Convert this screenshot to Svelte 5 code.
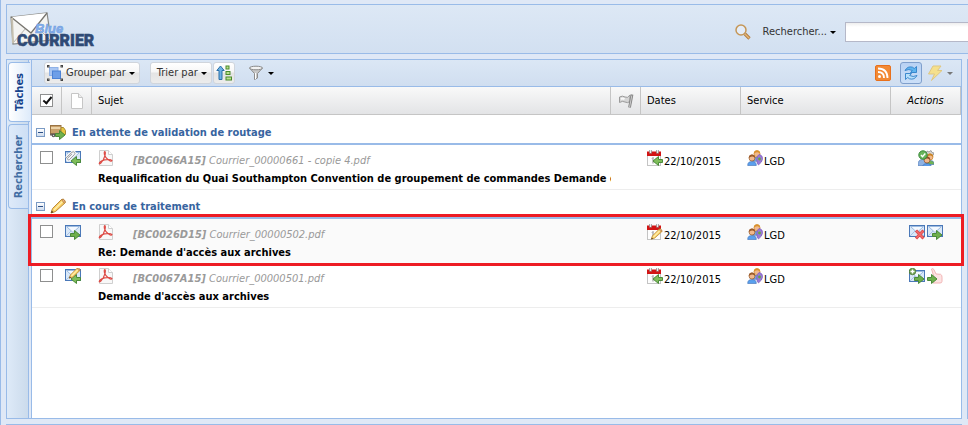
<script>
  const groups = [
    {
      title: 'En attente de validation de routage',
      icon: 'truck',
      rows: [
        {
          status: 'clipIn', ref: '[BC0066A15]', file: 'Courrier_00000661 - copie 4.pdf',
          subject: 'Requalification du Quai Southampton Convention de groupement de commandes Demande de subvention',
          dateIcon: 'calIn', date: '22/10/2015', service: 'LGD', actions: ['team']
        }
      ]
    },
    {
      title: 'En cours de traitement',
      icon: 'pencil',
      rows: [
        {
          status: 'mailOut', ref: '[BC0026D15]', file: 'Courrier_00000502.pdf',
          subject: "Re: Demande d'accès aux archives", marked: true,
          dateIcon: 'calEdit', date: '22/10/2015', service: 'LGD', actions: ['mailDelete', 'mailOut']
        },
        {
          status: 'mailEdit', ref: '[BC0067A15]', file: 'Courrier_00000501.pdf',
          subject: "Demande d'accès aux archives",
          dateIcon: 'calIn', date: '22/10/2015', service: 'LGD', actions: ['mailAdd', 'hand']
        }
      ]
    }
  ];
</script>

{#snippet envelope()}
  <rect x=".5" y="1.5" width="15" height="11" fill="#d9e8f8" stroke="#4a78b8" />
  <path d="M1 12 6 7M15 12 10 7" stroke="#a9c3e4" fill="none" />
  <path d="M1.5 2.5h13L8 8.500z" fill="#f4f9ff" stroke="#9dbbe0" />
{/snippet}

{#snippet arrowRight()}
  <path d="M5.5 9.5h4v-3l5.500 4.500-5.500 4.500v-3h-4z" fill="#6fb04c" stroke="#4b8a3a" />
{/snippet}

{#snippet arrowLeft()}
  <path d="M15.500 9.500h-4v-3L6 11l5.500 4.500v-3h4z" fill="#7fbd5a" stroke="#4b8a3a" />
{/snippet}

{#snippet pencil()}
  <path d="M1 15 2.500 10.500 11.500 1.500q2-1 3.200 1t-.3 3L5.500 13.500z" fill="#f9cf63" stroke="#b98a3c" />
  <path d="M4 12 12.500 3.500" stroke="#fff0ad" stroke-width="1.500" />
  <path d="M11.500 1.500q2-1 3.200 1t-.3 3z" fill="#eab08a" stroke="#a8752a" stroke-width=".7" />
  <path d="M1 15l.8-2.400 1.600 1.600z" fill="#4a3518" />
{/snippet}

{#snippet calendar()}
  <rect x=".5" y="3" width="13" height="12.500" fill="#fdfdfd" stroke="#c4c4c4" />
  <rect x="0" y="1.500" width="14" height="4.500" fill="#d21414" />
  <path d="M3.500 0v3.500M10.500 0v3.500" stroke="#999" stroke-width="2.600" />
  <path d="M3.500 0v3M10.500 0v3" stroke="#eee" stroke-width="1" />
  <path d="M5 8.500l1-1v6" stroke="#888" fill="none" />
{/snippet}

{#snippet person(x, y, hair, shirt)}
  <path d="M{x - 4.300} {y + 7.500}q-.2-4 4.300-4t4.300 4z" fill={shirt} stroke="#3f6fb5" stroke-width=".6" />
  <circle cx={x} cy={y} r="3" fill="#f0b98d" stroke={hair} stroke-width=".7" />
  <path d="M{x - 3.200} {y}q0-3.500 3.200-3.500t3.200 3.500q-1.500-1.700-3.200-1.500T{x - 3.200} {y}" fill={hair} />
{/snippet}

{#snippet icon(name)}
  <svg class="icon" width="16" height="16" viewBox="0 0 16 16" aria-hidden="true">
    {#if name === 'mailOut'}
      {@render envelope()}{@render arrowRight()}
    {:else if name === 'mailDelete'}
      {@render envelope()}
      <path d="M7 6.500l7.500 8M14.500 6.500l-7.500 8" stroke="#dc4444" stroke-width="3" />
      <path d="M7.500 7l6.500 7M14 7l-6.500 7" stroke="#f26a6a" stroke-width="1.600" />
    {:else if name === 'mailEdit'}
      {@render envelope()}
      {@render arrowLeft()}
      <g transform="translate(3.500 -1) scale(.75)">{@render pencil()}</g>
    {:else if name === 'clipIn'}
      {@render envelope()}
      <path d="M1 8 7 2.200q1.500-1 2.500.2t-.2 2.300L4.500 9.500q-1 .8-1.800 0t.2-1.600l4-3.800" fill="none" stroke="#f4f4f4" stroke-width="2.600" />
      <path d="M1 8 7 2.200q1.500-1 2.500.2t-.2 2.300L4.500 9.500q-1 .8-1.800 0t.2-1.600l4-3.800" fill="none" stroke="#9a9ea4" stroke-width="1" />
      {@render arrowLeft()}
    {:else if name === 'mailAdd'}
      <g transform="translate(0 1)">{@render envelope()}</g>
      {@render arrowRight()}
      <circle cx="3.500" cy="3.500" r="3.300" fill="#6d9f50" stroke="#47762f" stroke-width=".7" />
      <path d="M3.500 1.500v4M1.500 3.500h4" stroke="#fff" stroke-width="1.400" />
    {:else if name === 'hand'}
      <path d="M4.500 1q1.300-1.200 2.300.4L9 6l4.500.3q1.700.7 1.500 3v4q0 1.700-2 1.700H6L3.500 10 6.500 7.500z" fill="#fde3e3" stroke="#f2b6b6" />
      <path d="M.5 9.500h4v-3L10 11l-5.500 4.500v-3h-4z" fill="#6fb04c" stroke="#4b8a3a" />
    {:else if name === 'pencil'}
      {@render pencil()}
    {:else if name === 'truck'}
      <rect x=".5" y="1.500" width="10.500" height="8" fill="#c9a06a" stroke="#9a7444" />
      <path d="M1 4h9.500" stroke="#ecd3a8" stroke-width="2" />
      <path d="M11 3.500h2.500l2 3v4H11z" fill="#e9c63f" stroke="#a88a35" />
      <rect x="0" y="9.500" width="11" height="2" fill="#71635a" />
      <circle cx="3.500" cy="11.500" r="1.800" fill="#555" /><circle cx="3.500" cy="11.500" r=".7" fill="#ddd" />
      {@render arrowRight()}
    {:else if name === 'pdf'}
      <path d="M1.500.5h9l4 4v11h-13z" fill="#f8f8f8" stroke="#cfcfcf" />
      <path d="M10.500.5v4h4" fill="#fff" stroke="#cfcfcf" />
      <path d="M6.500 1.500q1.500 0 .5 4-1.300 5-4.500 8-2 1-1-.8Q3.500 10 9 9.600q4-.3 5 1-.5 1.300-3-.2Q7 7.600 6.300 4.200q-.3-2 .2-2.700" fill="none" stroke="#dd4a44" stroke-width="1.100" />
    {:else if name === 'page'}
      <path d="M2.500.5h7l4 4v11h-11z" fill="#fff" stroke="#c6c6c6" />
      <path d="M9.500.5v4h4" fill="#eee" stroke="#c6c6c6" />
    {:else if name === 'flag'}
      <path d="M1.500 4q3-1.700 5.500 0t5-2V8.500q-2.500 2-5 .5t-5.500.5z" fill="#d5d5d5" stroke="#9a9a9a" />
      <path d="M3 6q2-.9 3.500.2" stroke="#f8f8f8" stroke-width="2" fill="none" />
      <path d="M14 1.500 11.500 14.500" stroke="#858585" stroke-width="2.800" /><path d="M13.800 2.500 11.600 14" stroke="#ccc" stroke-width="1" />
    {:else if name === 'calIn'}
      {@render calendar()}{@render arrowLeft()}
    {:else if name === 'calEdit'}
      {@render calendar()}
      <g transform="translate(3.500 4) scale(.75)">{@render pencil()}</g>
    {:else if name === 'people'}
      {@render person(10, 3.800, '#d9912c', '#6fa2e4')}
      <path d="M12 4.500q4 .5 3.500 5-.7 3-4 5.500-2-1.500-1.700-5.500.2-4 2.200-5" fill="#9a7ad6" stroke="#7555b5" stroke-width=".6" />
      <circle cx="12.500" cy="9" r="1.400" fill="#65a93f" />
      {@render person(5, 8, '#9a5a2a', '#5aa0ee')}
    {:else if name === 'team'}
      <path d="M9 1l2 1 2-1.500 1 2 2 .5-1 2.500-4 1-3-3z" fill="#d8d8d8" stroke="#8c8c8c" stroke-width=".8" />
      {@render person(12, 7, '#c98324', '#70b356')}
      <path d="M0 15.500q-.3-6 4.500-6t4 6z" fill="#8eb2e3" stroke="#5681bd" stroke-width=".7" />
      {@render person(9, 10, '#8f4f28', '#5a9be8')}
      <circle cx="5" cy="5" r="4.200" fill="#68b55b" stroke="#39893a" /><path d="M3 5l1.500 1.700L7.300 3.500" stroke="#fff" stroke-width="1.400" fill="none" />
    {:else if name === 'group'}
      <rect x="2.500" y="2.500" width="8.500" height="8" fill="#a9c6f2" stroke="#8fb2e8" />
      <rect x="5.500" y="6" width="8" height="7.500" fill="#6e9fe8" stroke="#4d83d6" />
      <g fill="#fff" stroke="#444"><rect x=".5" y=".5" width="1.500" height="1.500" /><rect x="14" y=".5" width="1.500" height="1.500" /><rect x=".5" y="14" width="1.500" height="1.500" /><rect x="14" y="14" width="1.500" height="1.500" /></g>
    {:else if name === 'sort'}
      <path d="M4.500 1 8.200 5.500H6v9H3v-9H.8z" fill="#6db2e3" stroke="#2a6fa9" />
      <g fill="#b8e08c" stroke="#4a8a2c"><rect x="10" y="1" width="3" height="3" /><rect x="10" y="6.500" width="4" height="3" /><rect x="10" y="12" width="5.500" height="3" /></g>
    {:else if name === 'filter'}
      <path d="M1.500 3 6.500 8.500V14.500l3-1.500V8.500L14.500 3z" fill="#c9c9c9" stroke="#8c8c8c" />
      <path d="M7.500 8v6" stroke="#fff" />
      <ellipse cx="8" cy="3" rx="6.500" ry="1.800" fill="#f3f3f3" stroke="#8a8a8a" />
    {:else if name === 'search'}
      <circle cx="6" cy="6" r="5" fill="#e8f0fa" fill-opacity=".7" stroke="#c59656" stroke-width="1.500" />
      <path d="M10 10l4.500 4.500" stroke="#b07a3c" stroke-width="3.200" /><path d="M10.200 10.200l4 4" stroke="#e8b878" stroke-width="1.300" />
    {:else if name === 'rss'}
      <rect x=".5" y=".5" width="15" height="15" rx="1.500" fill="#f28a35" stroke="#e8701c" />
      <circle cx="4.500" cy="11.500" r="1.500" fill="#fff" />
      <path d="M3 7q6 0 6 6M3 3.500q9.500 0 9.500 9.500" fill="none" stroke="#fff" stroke-width="1.800" />
    {:else if name === 'refresh'}
      <path d="M2 5.500Q4.500.8 9.500 2.200l1.800 1.300L13.500 1.500v6H7.500L9.300 5.500Q6 3.500 2 5.500z" fill="#5fb4ee" stroke="#2f80c8" stroke-width=".9" />
      <path d="M14 10.500Q11.500 15.200 6.500 13.800l-1.800-1.300L2.500 14.500v-6h6L6.700 10.500q3.300 2 7.300 0z" fill="#b8e0fa" stroke="#2f80c8" stroke-width=".9" />
    {:else if name === 'bolt'}
      <path d="M6 1h8l-3.500 4.500H15L4.500 15.500 7.500 9H1.500z" fill="#f5e08c" stroke="#dfc781" />
    {/if}
  </svg>
{/snippet}

<div class="app">
  <header class="banner">
    <svg class="logo" width="86" height="40" viewBox="0 0 86 40" role="img" aria-label="Blue Courrier">
      <path d="M1 5 37 1 41 28 3 32z" fill="#f4f4f2" stroke="#8b8b87" stroke-width="1.200" />
      <path d="M3 31 16 16M40 28 26 14" stroke="#b5b3ae" fill="none" />
      <path d="M1 5 21 21 37 1" fill="#fff" stroke="#77756f" stroke-width="1.300" />
      <path d="M2 6 3 31" stroke="#c5bfae" stroke-width="2" />
      <text class="logo-main" x="7" y="34">COURRIER</text>
      <text class="logo-top" x="25" y="21">Blue</text>
    </svg>
    <div class="search">
      {@render icon('search')}
      <button class="plain" id="search-mode">Rechercher...<span class="caret"></span></button>
      <input type="text" aria-labelledby="search-mode" />
    </div>
  </header>

  <div class="work">
    <main class="panel">
      <nav class="tabs">
        <button class="tab active"><span>Tâches</span></button>
        <button class="tab"><span>Rechercher</span></button>
      </nav>
      <section class="content">
        <div class="toolbar">
          <button class="tool first">{@render icon('group')}Grouper par<span class="caret"></span></button>
          <button class="tool">Trier par<span class="caret"></span></button>
          <button class="tool square" aria-label="Ordre de tri">{@render icon('sort')}</button>
          <button class="plain filter" aria-label="Filtrer">{@render icon('filter')}<span class="caret"></span></button>
          <span class="spacer"></span>
          <button class="plain" aria-label="Flux RSS">{@render icon('rss')}</button>
          <button class="tool square pressed" aria-label="Actualiser">{@render icon('refresh')}</button>
          <button class="plain dim" aria-label="Actions" disabled>{@render icon('bolt')}<span class="caret"></span></button>
        </div>
        <table>
          <colgroup>
            <col class="w-icon" /><col class="w-icon" /><col /><col class="w-icon" />
            <col class="w-date" /><col class="w-service" /><col class="w-actions" />
          </colgroup>
          <thead>
            <tr>
              <th><input type="checkbox" checked aria-label="Tout sélectionner" /></th>
              <th class="mid">{@render icon('page')}</th>
              <th>Sujet</th>
              <th class="mid">{@render icon('flag')}</th>
              <th>Dates</th>
              <th>Service</th>
              <th class="mid"><em>Actions</em></th>
            </tr>
          </thead>
          {#each groups as group}
            <tbody>
              <tr class="group">
                <td colspan="7">
                  <div class="group-title">
                    <button class="toggle" aria-label="Réduire {group.title}"></button>
                    {@render icon(group.icon)}
                    <span>{group.title}</span>
                  </div>
                </td>
              </tr>
              {#each group.rows as row}
                <tr class="row" class:marked={row.marked}>
                  <td>
                    <input type="checkbox" aria-label={row.subject} />
                    {#if row.marked}<span class="frame"></span>{/if}
                  </td>
                  <td class="status">{@render icon(row.status)}</td>
                  <td>
                    <div class="line">{@render icon('pdf')}<a href="#{row.file}"><b>{row.ref}</b> {row.file}</a></div>
                    <div class="subject">{row.subject}</div>
                  </td>
                  <td></td>
                  <td><div class="line">{@render icon(row.dateIcon)}<span>{row.date}</span></div></td>
                  <td><div class="line">{@render icon('people')}<span>{row.service}</span></div></td>
                  <td class="actions">
                    <div class="line">
                      {#each row.actions as action}
                        <button class="action" aria-label={action}>{@render icon(action)}</button>
                      {/each}
                    </div>
                  </td>
                </tr>
              {/each}
            </tbody>
          {/each}
        </table>
      </section>
    </main>
    <aside class="side"></aside>
  </div>
  <footer class="bottom"></footer>
</div>

<style>
  :global(body) { margin: 0; background: #dfe8f6; }
  .app {
    box-sizing: border-box;
    height: 100vh;
    overflow: hidden;
    display: flex;
    flex-direction: column;
    padding: 4px 0 0 5px;
    border-left: 1px solid #99bbe8;
    font: 11px/14px Tahoma, "DejaVu Sans Condensed", "DejaVu Sans", sans-serif;
    color: #000;
  }
  button { font: inherit; color: #333; margin: 0; padding: 0; border: 0; background: none; }
  .icon { display: block; flex: none; }
  .caret {
    flex: none;
    width: 0;
    border: 3px solid transparent;
    border-top-color: #000;
    border-bottom: 0;
    margin-left: 3px;
  }

  .banner {
    display: flex;
    justify-content: space-between;
    flex: none;
    box-sizing: border-box;
    height: 50px;
    padding: 7px 0 0 3px;
    border: 1px solid #99bbe8;
    border-right: 0;
    background: linear-gradient(#dde8f5, #d2e0f1);
  }
  .logo { display: block; overflow: visible; }
  .logo-main { font: 900 16px Roboto, sans-serif; fill: #2f4a75; stroke: #2f4a75; stroke-width: .5px; }
  .logo-top { font: italic bold 13px "Liberation Sans", sans-serif; fill: #84aeea; stroke: #6d9be0; stroke-width: .5px; }
  .search { display: flex; align-items: center; height: 40px; }
  .search .plain { margin: 0 9px 0 12px; }
  .search input {
    box-sizing: border-box;
    width: 123px;
    height: 20px;
    border: 1px solid #b5b8c8;
    border-right: 0;
    background: linear-gradient(#eee, #fff 4px);
  }
  .plain { display: flex; align-items: center; }

  .work { flex: 1; display: flex; min-height: 0; margin: 5px 0; }
  .panel { flex: 1; min-width: 0; display: flex; border: 1px solid #99bbe8; }
  .side { flex: none; width: 1px; margin-left: 5px; background: #99bbe8; }
  .bottom { flex: none; height: 1px; margin-right: 6px; background: #99bbe8; }

  .tabs {
    flex: none;
    box-sizing: border-box;
    display: flex;
    flex-direction: column;
    gap: 2px;
    width: 22px;
    padding: 2px 0 0 1px;
    margin-right: 2px;
    border-right: 1px solid #99bbe8;
    background: linear-gradient(90deg, #deeaf8, #cbdbec);
  }
  .tab {
    box-sizing: border-box;
    width: 20px;
    height: 85px;
    border: 1px solid #99bbe8;
    border-right: 0;
    border-radius: 4px 0 0 4px;
    background: linear-gradient(90deg, #deeaf9, #cddff5);
    color: #416da3;
    font-weight: bold;
    display: flex;
    align-items: center;
    justify-content: center;
  }
  .tab.active { width: 22px; height: 60px; background: linear-gradient(90deg, #fff, #deebfa); color: #15428b; }
  .tab span { writing-mode: vertical-rl; transform: rotate(180deg); }

  .content { flex: 1; min-width: 0; border-left: 1px solid #99bbe8; background: #fff; }
  .toolbar {
    display: flex;
    align-items: center;
    height: 26px;
    padding: 0 8px 0 12px;
    border-bottom: 1px solid #99bbe8;
    background: linear-gradient(#dbe7f5, #d0def0);
  }
  .tool {
    box-sizing: border-box;
    display: flex;
    align-items: center;
    height: 22px;
    padding: 0 4px 0 6px;
    border: 1px solid #d0d5dc;
    border-radius: 3px;
    background: linear-gradient(#fff, #f6f6f6 45%, #e4e4e4 50%, #ececec);
  }
  .tool.first { margin-right: 10px; padding-left: 2px; }
  .first .icon { margin-right: 3px; }
  .tool.square { width: 22px; justify-content: center; padding: 0; margin-left: 1px; }
  .tool.pressed { margin: 0 5px 0 9px; border-color: #7f9fcc; background: linear-gradient(#b9d2f3, #cbdff8); }
  .filter { margin-left: 13px; }
  .filter .caret, .dim .caret { margin-left: 4px; }
  .dim .caret { border-top-color: #777; }
  .spacer { flex: 1; }

  table { width: 100%; table-layout: fixed; border-collapse: separate; border-spacing: 0; }
  .w-icon { width: 30px; }
  .w-date { width: 100px; }
  .w-service { width: 150px; }
  .w-actions { width: 70px; }
  th {
    box-sizing: border-box;
    height: 28px;
    padding: 0 6px;
    text-align: left;
    font-weight: normal;
    background: linear-gradient(#f9f9f9, #e3e4e6);
    border-right: 1px solid #c5c5c5;
    border-bottom: 1px solid #c5c5c5;
  }
  .mid { text-align: center; }
  .mid .icon { margin: 0 auto; }
  input[type="checkbox"] {
    appearance: none;
    display: block;
    box-sizing: border-box;
    width: 13px;
    height: 13px;
    margin: 0 2px;
    border: 1px solid #8e8f8f;
    background: #fff;
  }
  input[type="checkbox"]:checked::after {
    content: "";
    display: block;
    box-sizing: border-box;
    width: 5px;
    height: 9px;
    margin: 0 0 0 4px;
    border: solid #111;
    border-width: 0 2px 2px 0;
    transform: rotate(40deg);
  }

  td { padding: 0; vertical-align: top; }
  .group td { height: 28px; border-bottom: 2px solid #99bbe8; }
  .group-title { display: flex; align-items: center; height: 20px; padding: 7px 0 1px 4px; color: #3764a0; font-weight: bold; }
  .group-title span { padding-top: 1px; }
  .group-title .icon { margin: 0 6px 0 5px; }
  .toggle {
    width: 9px;
    height: 9px;
    border: 1px solid #7a9ac4;
    box-sizing: border-box;
    background: linear-gradient(#2c4f86, #2c4f86) center / 5px 1px no-repeat, linear-gradient(#fff, #cfdcee);
  }
  .row { position: relative; box-shadow: 0 1px 0 #ededed; }
  .row td { height: 38px; padding: 5px 0 1px 6px; }
  .row td.status { padding-left: 3px; }
  .row input { margin-top: 1px; }
  .row td:nth-child(3) { overflow: hidden; white-space: nowrap; }
  .line { display: flex; height: 22px; }
  .line span { padding: 5px 0 0 1px; }
  .line a { padding: 4px 0 0 19px; color: #999; font-style: italic; text-decoration: none; }
  .subject { font-weight: bold; line-height: 14px; }
  .actions .line { justify-content: center; gap: 2px; margin-right: 6px; }
  .action { height: 16px; }
  .marked { background: #fafafa; }
  .frame {
    position: absolute;
    inset: -5px -3px -3px -4px;
    border: 3px solid #ed1c24;
    pointer-events: none;
  }
</style>
